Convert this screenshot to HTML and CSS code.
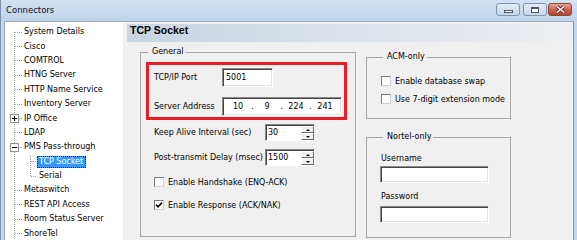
FILE: index.html
```html
<!DOCTYPE html>
<html lang="en">
	<head>
		<title>Connectors</title>
		<meta charset="utf-8">
		<link rel="stylesheet" href="styles.css">
	</head>
	<body>
		<div class="window">
			<div class="titlebar">
				<span class="caption">Connectors</span>
				<div class="caption-buttons">
					<span class="cbtn min"><i></i></span>
					<span class="cbtn max"><i></i></span>
					<span class="cbtn close">
						<svg width="11" height="9" viewBox="0 0 11 9">
							<path d="M2 1.5 L9 7.5 M9 1.5 L2 7.5" stroke="#5a2a22" stroke-width="3.2" fill="none"/>
							<path d="M2 1.5 L9 7.5 M9 1.5 L2 7.5" stroke="#ffffff" stroke-width="1.6" fill="none"/>
						</svg>
					</span>
				</div>
			</div>

			<div class="client">
				<div class="tree">
					<ul class="nodes">
						<li><div class="row"><span class="label">System Details</span></div></li>
						<li><div class="row"><span class="label">Cisco</span></div></li>
						<li><div class="row"><span class="label">COMTROL</span></div></li>
						<li><div class="row"><span class="label">HTNG Server</span></div></li>
						<li><div class="row"><span class="label">HTTP Name Service</span></div></li>
						<li><div class="row"><span class="label">Inventory Server</span></div></li>
						<li><div class="row parent"><span class="exp plus"></span><span class="label">IP Office</span></div></li>
						<li><div class="row"><span class="label">LDAP</span></div></li>
						<li>
							<div class="row parent"><span class="exp minus"></span><span class="label">PMS Pass-through</span></div>
							<ul class="nodes sub">
								<li><div class="row"><span class="label sel">TCP Socket</span></div></li>
								<li><div class="row"><span class="label">Serial</span></div></li>
							</ul>
						</li>
						<li><div class="row"><span class="label">Metaswitch</span></div></li>
						<li><div class="row"><span class="label">REST API Access</span></div></li>
						<li><div class="row"><span class="label">Room Status Server</span></div></li>
						<li><div class="row"><span class="label">ShoreTel</span></div></li>
					</ul>
				</div>

				<div class="panel">
					<div class="panel-head">TCP Socket</div>
					<div class="panel-body">
						<fieldset class="group general">
							<legend>General</legend>
							<div class="highlight">
								<div class="field">
									<label>TCP/IP Port</label>
									<span class="edit port">5001</span>
								</div>
								<div class="field">
									<label>Server Address</label>
									<span class="edit ip"><span>10</span><i>.</i><span>9</span><i>.</i><span>224</span><i>.</i><span>241</span></span>
								</div>
							</div>
							<div class="field opt first">
								<label class="wide">Keep Alive Interval (sec)</label>
								<span class="spin"><span class="spin-val">30</span><span class="spin-btns"><b class="up"></b><b class="down"></b></span></span>
							</div>
							<div class="field opt">
								<label class="wide">Post-transmit Delay (msec)</label>
								<span class="spin"><span class="spin-val">1500</span><span class="spin-btns"><b class="up"></b><b class="down"></b></span></span>
							</div>
							<div class="check opt"><span class="box"></span>Enable Handshake (ENQ-ACK)</div>
							<div class="check opt"><span class="box"><svg width="8" height="8" viewBox="0 0 8 8"><path d="M1 3.8 L3 5.8 L7 1.6" stroke="#000" stroke-width="1.6" fill="none"/></svg></span>Enable Response (ACK/NAK)</div>
						</fieldset>

						<div class="side">
							<fieldset class="group acm">
								<legend>ACM-only</legend>
								<div class="check"><span class="box"></span>Enable database swap</div>
								<div class="check"><span class="box"></span>Use 7-digit extension mode</div>
							</fieldset>
							<fieldset class="group nortel">
								<legend>Nortel-only</legend>
								<div class="stacked">Username</div>
								<span class="edit text"></span>
								<div class="stacked second">Password</div>
								<span class="edit text"></span>
							</fieldset>
						</div>
					</div>
				</div>
			</div>
		</div>
	</body>
</html>
```

FILE: styles.css
```css
html, body {
	margin: 0;
}
body {
	font-family: "DejaVu Sans", sans-serif;
	font-size: 8px;
	color: #000;
	background: #ffffff;
	overflow: hidden;
}
.window {
	width: 577px;
	height: 240px;
	box-sizing: border-box;
	border-left: 1px solid #7d93ae;
	background: #c3d6ed;
	display: flex;
	flex-direction: column;
	overflow: hidden;
}

/* title bar */
.titlebar {
	height: 21px;
	flex: none;
	display: flex;
	align-items: flex-start;
	padding: 0 5px 0 5px;
	background: linear-gradient(#d2e2f4, #bed3eb);
}
.caption {
	font-size: 8.5px;
	line-height: 20px;
	color: #111;
}
.caption-buttons {
	margin-left: auto;
	margin-top: 3px;
	display: flex;
}
.cbtn {
	width: 24px;
	height: 13px;
	box-sizing: border-box;
	border: 1px solid #7e93ad;
	border-radius: 3px;
	background: linear-gradient(#e4edf8, #c4d5ea);
	display: flex;
	align-items: center;
	justify-content: center;
}
.cbtn.max {
	margin-left: 3px;
}
.cbtn.close {
	margin-left: 1px;
	border-color: #8b4538;
	background: linear-gradient(#e8a899, #cd6352 50%, #b9412f);
}
.cbtn.min i {
	width: 7px;
	height: 1px;
	margin-top: 4px;
	border: 1px solid #4a5566;
	background: #fff;
}
.cbtn.max i {
	width: 6px;
	height: 3px;
	border: 1px solid #4a5566;
	border-top-width: 2px;
	background: #fff;
}

/* client */
.client {
	flex: 1;
	display: flex;
	margin: 0 3px 0 3px;
	border-top: 1px solid #9daabb;
	border-left: 1px solid #9daabb;
	border-right: 1px solid #8a98aa;
	min-height: 0;
}
.tree {
	width: 118px;
	flex: none;
	background: #fff;
	overflow: hidden;
}
.nodes {
	list-style: none;
	margin: 0;
	padding: 3px 0 0 10px;
	background: repeating-linear-gradient(to bottom, #a0a0a0 0 1px, transparent 1px 2px) 9px 10px / 1px 100% no-repeat;
}
.nodes.sub {
	padding: 0 0 0 16px;
	background-position: 15px 0;
	background-size: 1px calc(100% - 7px);
}
.row {
	display: flex;
	align-items: center;
	height: 14.4px;
	white-space: nowrap;
}
.row::before {
	content: '';
	flex: none;
	width: 7px;
	height: 1px;
	background: repeating-linear-gradient(to right, #a0a0a0 0 1px, transparent 1px 2px);
}
.row.parent::before {
	width: 3px;
}
.sub .row::before {
	width: 6px;
}
.label {
	padding: 1px 3px 1px 2px;
	line-height: 10px;
}
.label.sel {
	background: #3399ff;
	color: #fff;
	outline: 1px dotted #1c1c1c;
	outline-offset: -1px;
}
.exp {
	order: -1;
	flex: none;
	width: 7px;
	height: 7px;
	margin-left: -5px;
	border: 1px solid #919191;
	background: #fff;
}
.exp.plus {
	background: linear-gradient(#000, #000) center / 5px 1px no-repeat, linear-gradient(#000, #000) center / 1px 5px no-repeat, #fff;
}
.exp.minus {
	background: linear-gradient(#000, #000) center / 5px 1px no-repeat, #fff;
}

/* right panel */
.panel {
	flex: 1;
	background: #f0f0f0;
	min-width: 0;
}
.panel-head {
	margin: 2px 0 0 4px;
	height: 18px;
	line-height: 18px;
	padding-left: 3px;
	font: bold 10.5px "Liberation Sans", sans-serif;
	background: linear-gradient(to right, #c9d5e2, #dfe5ec 60%, #edf0f3);
}
.panel-body {
	display: flex;
	align-items: flex-start;
	gap: 10px;
	padding-left: 17px;
}
.group {
	margin: 0;
	padding: 0;
	border: 1px solid #a9a9a9;
	box-sizing: border-box;
	min-width: 0;
}
.group legend {
	margin-left: 2px;
	padding: 0 2px 0 4px;
	line-height: 10px;
}
.general {
	width: 216px;
	height: 190px;
	margin-top: 5px;
	padding: 5px 0 0 5px;
}
.highlight {
	width: 201px;
	box-sizing: border-box;
	border: 3px solid #ec1c24;
	padding: 3px 0 1px 5px;
	display: flex;
	flex-direction: column;
	gap: 10px;
}
.field {
	display: flex;
	align-items: center;
}
.field label {
	width: 68px;
	flex: none;
}
.field label.wide {
	width: 111px;
}
.edit {
	box-sizing: border-box;
	height: 19px;
	background: #fff;
	border: 1px solid;
	border-color: #8a8a8a #ffffff #ffffff #8a8a8a;
	box-shadow: inset 1px 1px 0 #444, inset -1px -1px 0 #e3e3e3;
	line-height: 17px;
	padding-left: 3px;
}
.port {
	width: 51px;
}
.ip {
	width: 120px;
	display: flex;
	padding-left: 4px;
}
.ip span {
	width: 22px;
	text-align: center;
}
.ip i {
	width: 7px;
	font-style: normal;
	text-align: center;
}
.opt {
	padding-left: 8px;
}
.opt.first {
	margin-top: 4px;
}
.opt + .opt {
	margin-top: 8px;
}
.spin {
	display: flex;
	width: 50px;
	height: 17px;
	box-sizing: border-box;
	background: #fff;
	border: 1px solid;
	border-color: #8a8a8a #ffffff #ffffff #8a8a8a;
	box-shadow: inset 1px 1px 0 #444;
	padding: 1px 0 0 1px;
}
.spin-val {
	flex: 1;
	line-height: 14px;
	padding-left: 1px;
}
.spin-btns {
	width: 13px;
	display: flex;
	flex-direction: column;
}
.spin-btns b {
	flex: 1;
	box-sizing: border-box;
	background: #f0f0f0;
	border: 1px solid;
	border-color: #ffffff #696969 #696969 #ffffff;
	display: flex;
	align-items: center;
	justify-content: center;
}
.spin-btns b::after {
	content: '';
	border-left: 2px solid transparent;
	border-right: 2px solid transparent;
}
.spin-btns .up::after {
	border-bottom: 2px solid #000;
}
.spin-btns .down::after {
	border-top: 2px solid #000;
}
.check {
	display: flex;
	align-items: center;
	gap: 4px;
	height: 14px;
	white-space: nowrap;
}
.general .check {
	margin-top: 9px;
}
.box {
	width: 10px;
	height: 10px;
	flex: none;
	box-sizing: border-box;
	background: #fff;
	border: 1px solid;
	border-color: #7a7a7a #d0d0d0 #d0d0d0 #7a7a7a;
	display: flex;
	align-items: center;
	justify-content: center;
}
.box svg {
	display: block;
}
.side {
	display: flex;
	flex-direction: column;
	width: 145px;
}
.acm {
	margin-top: 10px;
	height: 67px;
	padding: 13px 0 0 14px;
}
.acm .check {
	height: 12px;
}
.acm .check + .check {
	margin-top: 6px;
}
.nortel {
	margin-top: 13px;
	height: 106px;
	padding: 12px 0 0 14px;
}
.stacked {
	line-height: 10px;
}
.stacked.second {
	margin-top: 9px;
}
.edit.text {
	display: block;
	width: 109px;
	height: 17px;
	margin: 2px 0 0 -1px;
}
.stacked.second + .edit.text {
	margin-top: 4px;
}
```
